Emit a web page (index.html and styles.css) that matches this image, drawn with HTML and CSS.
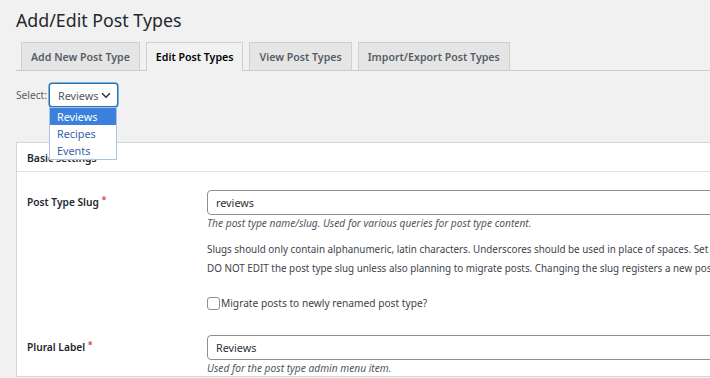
FILE: index.html
```html
<!DOCTYPE html>
<html>
<head>
<meta charset="utf-8">
<link rel="stylesheet" href="styles.css">
</head>
<body>
<div class="wrap">
  <h1 class="title">Add/Edit Post Types</h1>
  <nav class="tabs">
    <span class="tab">Add New Post Type</span>
    <span class="tab active">Edit Post Types</span>
    <span class="tab">View Post Types</span>
    <span class="tab">Import/Export Post Types</span>
  </nav>
  <div class="select-row">
    <span class="select-label">Select:</span>
    <div class="select-wrap">
      <div class="select">
        <span>Reviews</span>
        <svg class="chev" width="10" height="7" viewBox="0 0 10 7"><path d="M1 1.2 L5 5.2 L9 1.2" fill="none" stroke="#2c3338" stroke-width="1.5"/></svg>
      </div>
      <ul class="dropdown">
        <li class="opt sel">Reviews</li>
        <li class="opt">Recipes</li>
        <li class="opt">Events</li>
      </ul>
    </div>
  </div>
  <div class="card">
    <div class="card-head">Basic settings</div>
    <div class="card-body">
      <div class="row">
        <div class="label">Post Type Slug <span class="req">*</span></div>
        <div class="field">
          <div class="input">reviews</div>
          <p class="desc">The post type name/slug. Used for various queries for post type content.</p>
          <p class="note first">Slugs should only contain alphanumeric, latin characters. Underscores should be used in place of spaces. Set "Custom Rewrite Slug" field to make slug use dashes for URLs.</p>
          <p class="note">DO NOT EDIT the post type slug unless also planning to migrate posts. Changing the slug registers a new post type entry.</p>
          <label class="check"><span class="box"></span>Migrate posts to newly renamed post type?</label>
        </div>
      </div>
      <div class="row">
        <div class="label">Plural Label <span class="req">*</span></div>
        <div class="field">
          <div class="input">Reviews</div>
          <p class="desc">Used for the post type admin menu item.</p>
        </div>
      </div>
    </div>
  </div>
</div>
</body>
</html>
```
FILE: styles.css
```css
html, body {
  margin: 0;
  padding: 0;
  background: #f1f1f1;
  overflow: hidden;
  height: 378px;
}
body {
  font-family: "Noto Sans", "Open Sans", sans-serif;
  font-size: 10.2px;
  color: #3c434a;
}
.wrap {
  padding-left: 16px;
  width: 1000px;
}
.title {
  margin: 0;
  padding-top: 7px;
  font-size: 17.8px;
  font-weight: 400;
  line-height: 27px;
  color: #23282d;
}
.tabs {
  display: flex;
  gap: 6px;
  margin-top: 8px;
  padding-left: 5px;
  border-bottom: 1px solid #cbcbcb;
  height: 28px;
}
.tab {
  box-sizing: border-box;
  height: 28px;
  padding: 0 9px;
  display: flex;
  align-items: center;
  background: #e5e5e5;
  border: 1px solid #d0d0d0;
  border-bottom: none;
  font-size: 10.6px;
  font-weight: 600;
  color: #555d66;
  white-space: nowrap;
}
.tab.active {
  background: #f1f1f1;
  color: #000;
  height: 29px;
  margin-bottom: -1px;
}
.select-row {
  display: flex;
  align-items: center;
  margin-top: 12px;
  height: 24px;
}
.select-label {
  color: #555d66;
  width: 33px;
  font-size: 10.2px;
}
.select-wrap {
  position: relative;
}
.select {
  box-sizing: border-box;
  width: 69px;
  height: 24px;
  border: 1px solid #2271b1;
  border-radius: 3px;
  background: #fff;
  display: flex;
  align-items: center;
  justify-content: space-between;
  padding: 0 6px 0 8px;
  font-size: 10.8px;
  color: #50575e;
  box-shadow: 0 0 0 0.5px #2271b1;
}
.dropdown {
  position: absolute;
  left: 0;
  top: 24px;
  z-index: 5;
  margin: 0;
  padding: 0;
  list-style: none;
  width: 68px;
  box-sizing: border-box;
  background: #fff;
  border: 1px solid #a9c4e8;
}
.opt {
  height: 17px;
  line-height: 17px;
  padding-left: 7px;
  font-size: 10.8px;
  color: #3a62a8;
}
.opt.sel {
  background: #3b80dd;
  color: #fff;
}
.card {
  margin-top: 35px;
  background: #fff;
  border: 1px solid #d5d5d5;
}
.card-head {
  height: 28px;
  line-height: 30px;
  padding-left: 10px;
  font-weight: 600;
  font-size: 10.4px;
  color: #23282d;
  border-bottom: 1px solid #e2e2e2;
}
.card-body {
  padding-top: 18px;
}
.row {
  display: flex;
}
.label {
  flex-shrink: 0;
  width: 180px;
  padding-left: 10px;
  line-height: 24px;
  font-weight: 600;
  color: #23282d;
  font-size: 10.2px;
}
.req {
  color: #d63638;
  font-size: 9px;
  position: relative;
  top: -3px;
}
.field {
  flex: 1;
  min-width: 0;
}
.input {
  box-sizing: border-box;
  height: 25px;
  border: 1px solid #8c8f94;
  border-radius: 4px;
  padding-left: 8px;
  line-height: 23px;
  font-size: 10.8px;
  color: #2c3338;
}
.desc {
  margin: 1px 0 0;
  font-style: italic;
  font-size: 10.2px;
  color: #50575e;
  line-height: 15px;
}
.note {
  margin: 0;
  line-height: 19px;
  font-size: 9.85px;
  white-space: nowrap;
}
.note.first {
  margin-top: 9px;
}
.check {
  display: flex;
  align-items: center;
  margin-top: 17px;
  line-height: 16px;
  white-space: nowrap;
  font-size: 10.2px;
  color: #3c434a;
}
.box {
  box-sizing: border-box;
  width: 13px;
  height: 13px;
  border: 1px solid #8c8f94;
  border-radius: 3px;
  margin-right: 1px;
  background: #fff;
}
.row + .row {
  margin-top: 24px;
}
```
